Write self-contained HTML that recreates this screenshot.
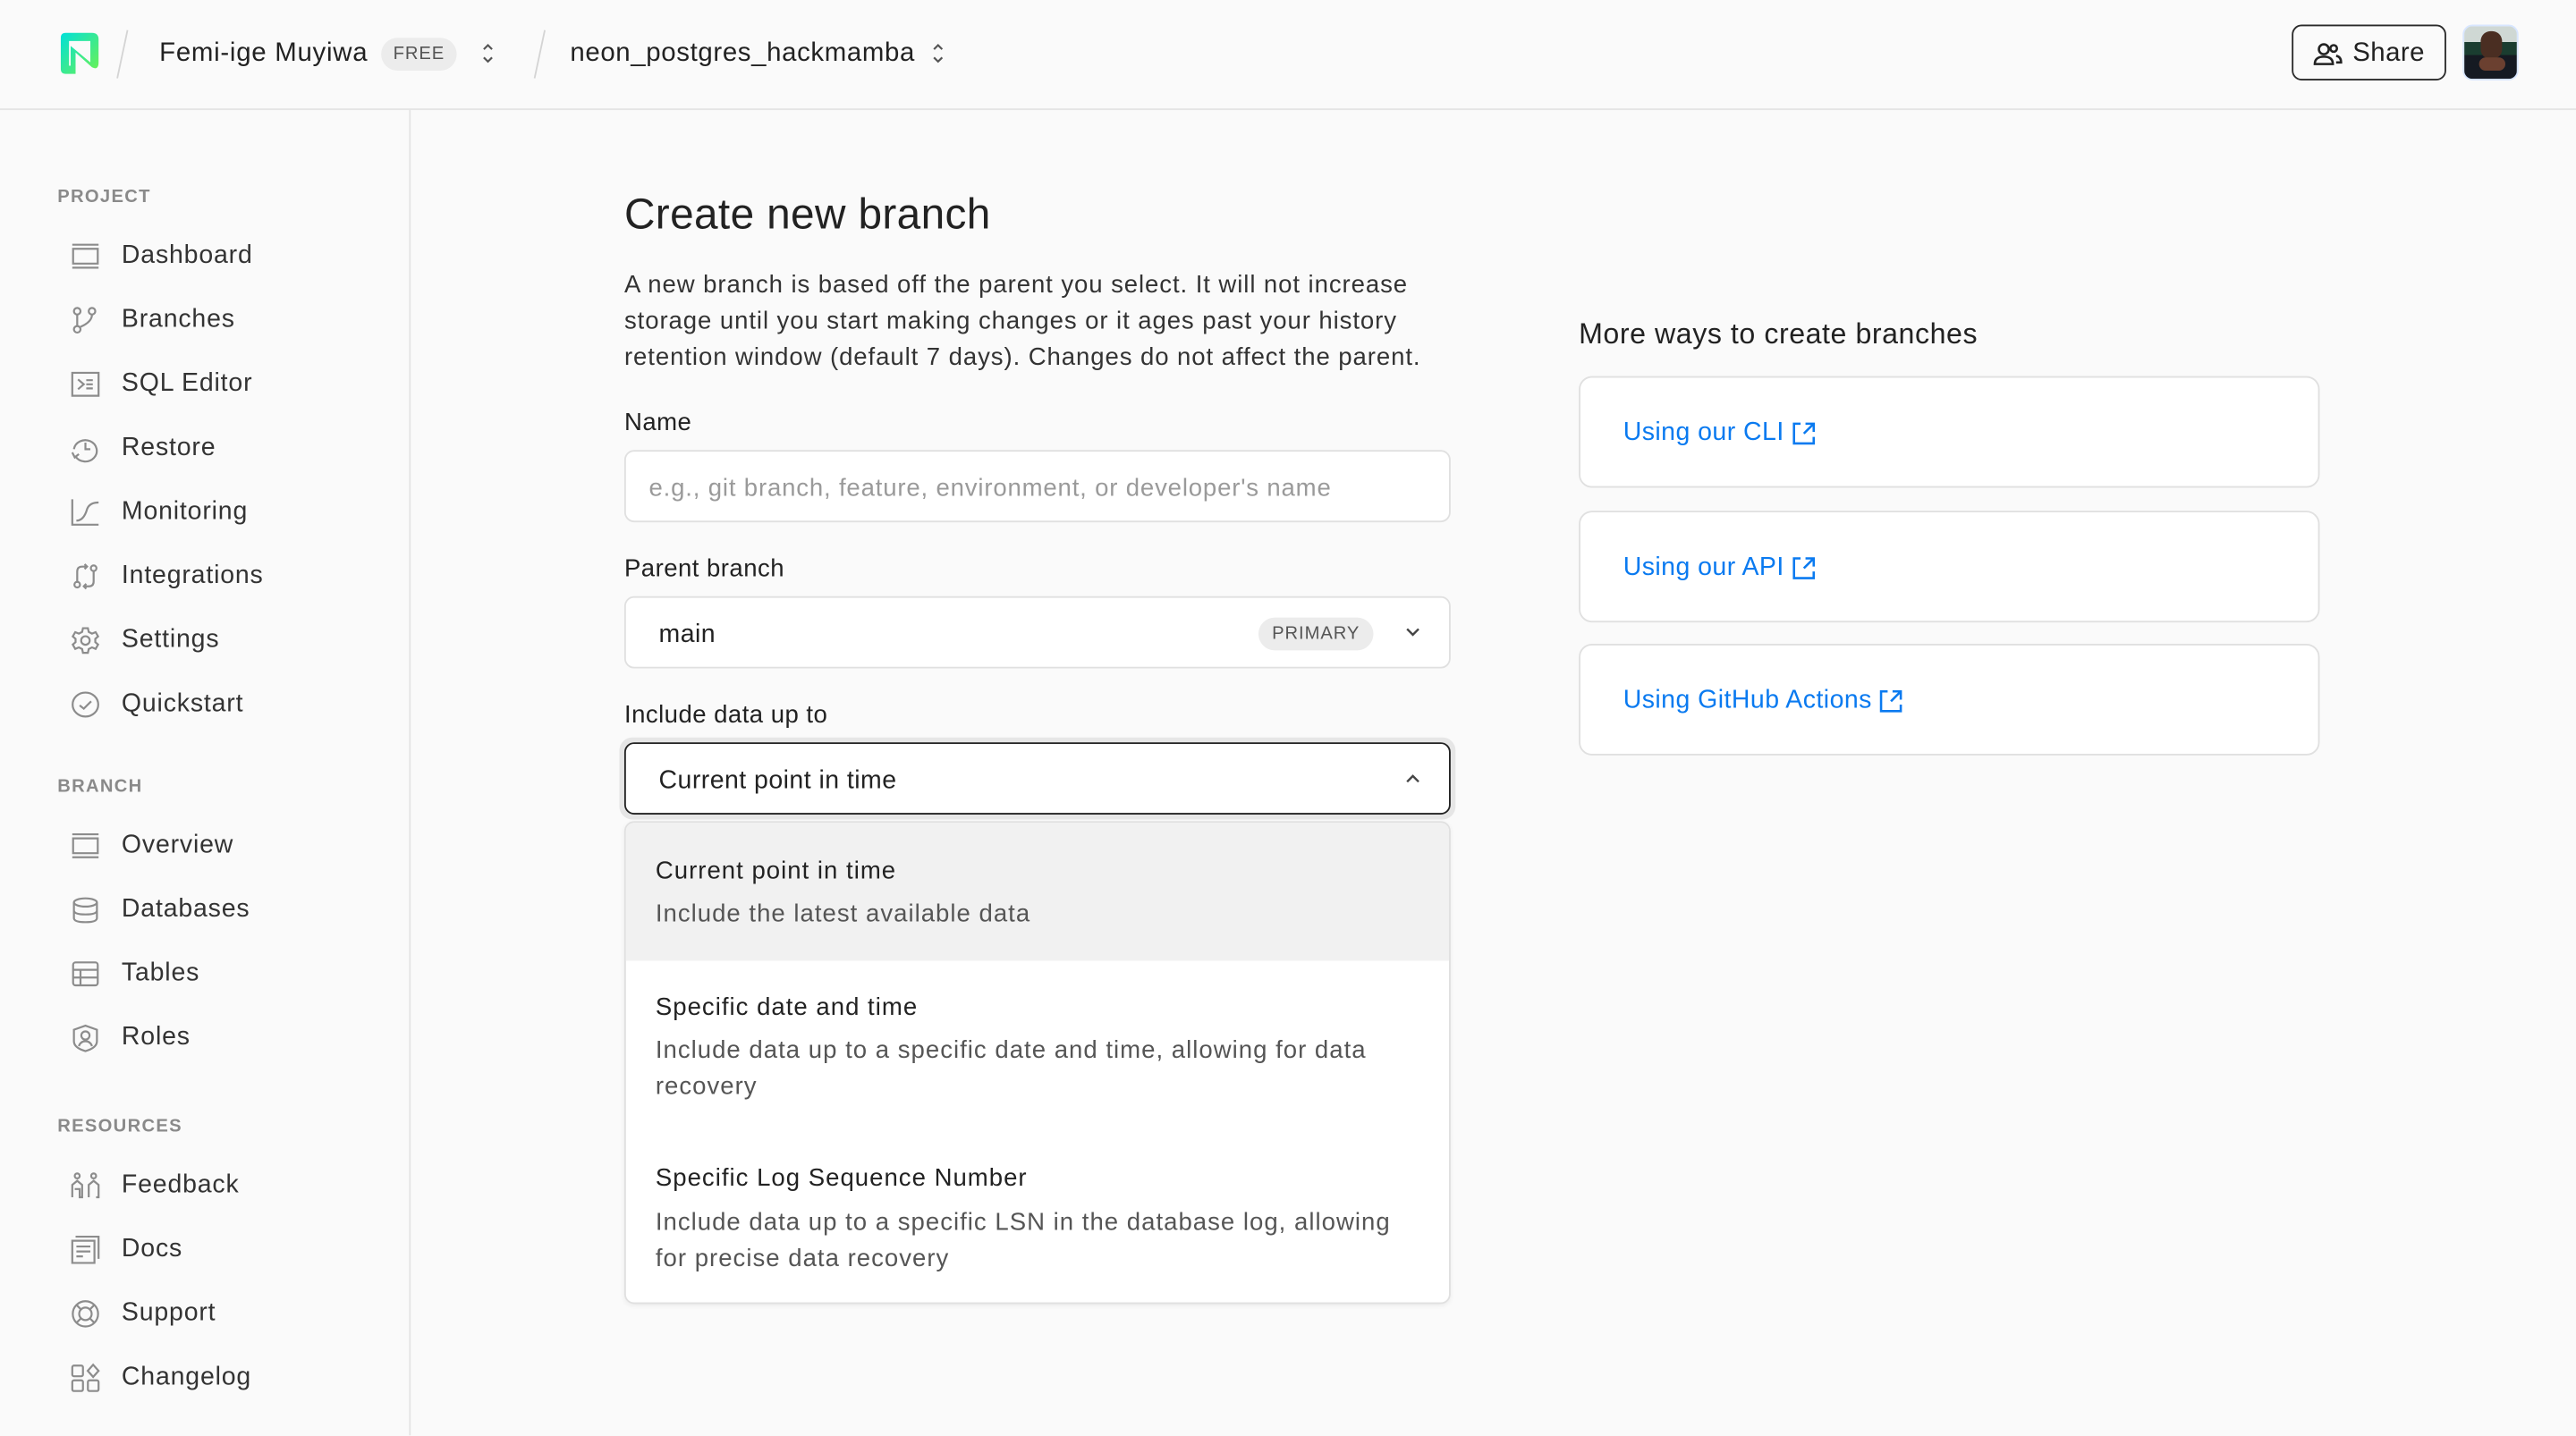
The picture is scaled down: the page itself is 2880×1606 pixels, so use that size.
<!DOCTYPE html>
<html><head><meta charset="utf-8"><style>
*{box-sizing:border-box;margin:0;padding:0}
html,body{width:2880px;height:1606px;overflow:hidden;background:#fafafa}
#r{position:absolute;left:0;top:0;width:1568px;height:874px;transform:scale(1.83673);transform-origin:0 0;font-family:"Liberation Sans",sans-serif;color:#222;background:#fafafa;letter-spacing:.25px}
.a{position:absolute;white-space:nowrap}
.hdr{position:absolute;left:0;top:0;width:1568px;height:67px;border-bottom:1px solid #e4e4e4;background:#fafafa}
.side{position:absolute;left:0;top:67px;width:250px;height:807px;border-right:1px solid #e4e4e4}
.sec{position:absolute;left:35px;font-size:11px;letter-spacing:.7px;color:#8a8a8a;font-weight:bold}
.it{position:absolute;left:43px;height:22px;display:flex;align-items:center;font-size:15.5px;color:#333;letter-spacing:.45px}
.it svg{width:18px;height:18px;margin-right:13px;fill:none;stroke:#8c8c8c;stroke-width:1.2}
.lbl{position:absolute;left:380px;font-size:15px;color:#222}
.box{position:absolute;left:380px;width:503px;height:44px;border:1px solid #e0e0e0;border-radius:6px;background:#fff}
.card{position:absolute;left:961px;width:451px;height:68px;border:1px solid #e0e0e0;border-radius:8px;background:#fff}
.card span{position:absolute;left:26px;top:25px;font-size:15.5px;color:#0a7af0;display:flex;align-items:center}
.card svg{margin-left:4px;width:16px;height:16px;fill:none;stroke:#0a7af0;stroke-width:1.4}
.dd{letter-spacing:.55px}
</style></head><body><div id="r">
<div class="hdr">
  <svg class="a" style="left:35px;top:19px" width="26" height="27" viewBox="0 0 26 27"><defs><linearGradient id="g" x1="0" y1="0" x2="1" y2="1"><stop offset="0" stop-color="#00e0d9"/><stop offset="1" stop-color="#6ff24f"/></linearGradient></defs><path d="M2 4 Q2 1 5 1 H21 Q25 1 25 5 V19 Q25 24 21 22 L11 13 V26 H5 Q2 26 2 23 Z M7 6 V21 H8 V9 L20 19 V6 Z" fill="url(#g)" fill-rule="evenodd"/></svg>
  <div class="a" style="left:74px;top:18px;width:1px;height:30px;background:#d4d4d4;transform:rotate(12deg)"></div>
  <div class="a" style="left:97px;top:24px;font-size:16px;color:#222;letter-spacing:.4px">Femi-ige Muyiwa</div>
  <div class="a" style="left:232px;top:23px;width:46px;height:20px;border-radius:10px;background:#ececec;font-size:11px;color:#555;text-align:center;line-height:20px;letter-spacing:.5px">FREE</div>
  <svg class="a" style="left:292px;top:25px" width="10" height="15" viewBox="0 0 10 15" fill="none" stroke="#555" stroke-width="1.2"><path d="M2.5 5L5 2.5L7.5 5M2.5 10L5 12.5L7.5 10"/></svg>
  <div class="a" style="left:328px;top:18px;width:1px;height:30px;background:#d4d4d4;transform:rotate(12deg)"></div>
  <div class="a" style="left:347px;top:24px;font-size:16px;color:#222;letter-spacing:.35px">neon_postgres_hackmamba</div>
  <svg class="a" style="left:566px;top:25px" width="10" height="15" viewBox="0 0 10 15" fill="none" stroke="#555" stroke-width="1.2"><path d="M2.5 5L5 2.5L7.5 5M2.5 10L5 12.5L7.5 10"/></svg>
  <div class="a" style="left:1395px;top:15px;width:94px;height:34px;border:1.5px solid #2a2a2a;border-radius:6px;display:flex;align-items:center;justify-content:center;font-size:16px;color:#222;padding-top:2px"><svg width="18" height="16" viewBox="0 0 18 16" style="margin-right:6px" fill="none" stroke="#222" stroke-width="1.4"><circle cx="6.5" cy="5" r="3"/><path d="M1 14 Q1 9.5 6.5 9.5 Q12 9.5 12 14 Z"/><circle cx="12.5" cy="4.5" r="2"/><path d="M14 9 Q17 9.5 17 13 H14"/></svg>Share</div>
  <div class="a" style="left:1499px;top:15px;width:34px;height:34px;border-radius:6px;border:1.5px solid #d8e6ff;overflow:hidden;background:linear-gradient(180deg,#cfd8d4 0,#cfd8d4 30%,#1a3d30 30%,#1a3d30 55%,#151a22 55%)"><div style="position:absolute;left:10px;top:3px;width:13px;height:17px;border-radius:6px;background:#4a2e22"></div><div style="position:absolute;left:9px;top:19px;width:16px;height:8px;border-radius:4px;background:#6b4030"></div></div>
</div>
<div class="side">
  <div class="sec" style="top:47px">PROJECT</div>
  <div class="it" style="top:78px"><svg viewBox="0 0 18 18"><path d="M1 2H17M1 16H17M1.5 4.5H16.5V13.5H1.5Z"/></svg>Dashboard</div>
  <div class="it" style="top:117px"><svg viewBox="0 0 18 18"><circle cx="4" cy="3.5" r="2"/><circle cx="13" cy="3.5" r="2"/><circle cx="4" cy="14.5" r="2"/><path d="M4 5.5V12.5M13 5.5Q13 10 6 13"/></svg>Branches</div>
  <div class="it" style="top:156px"><svg viewBox="0 0 18 18"><path d="M1 2H17V16H1ZM4.5 6L8 9L4.5 12M9.5 6.5H13.5M9.5 9H13.5M9.5 11.5H13.5"/></svg>SQL Editor</div>
  <div class="it" style="top:195px"><svg viewBox="0 0 18 18"><path d="M3 14A7 6.5 0 1 0 2 9.5M1 11.5L2.5 14.5L5 12.5M9 5.5V9.5H12"/></svg>Restore</div>
  <div class="it" style="top:234px"><svg viewBox="0 0 18 18"><path d="M1 1V16.5H17M3.5 14Q8 14 10 7Q11.5 3 17 3"/></svg>Monitoring</div>
  <div class="it" style="top:273px"><svg viewBox="0 0 18 18"><circle cx="4" cy="14" r="1.7"/><circle cx="14" cy="4" r="1.7"/><path d="M4 12V6Q4 3 7 3H10M8.5 1.5L10 3L8.5 4.5M14 6V12Q14 15 11 15H8M9.5 13.5L8 15L9.5 16.5"/></svg>Integrations</div>
  <div class="it" style="top:312px"><svg viewBox="0 0 18 18"><circle cx="9" cy="9" r="2.6"/><path d="M7.5 1.5H10.5L11 3.8L13 4.8L15.2 3.9L16.7 6.5L15 8V10L16.7 11.5L15.2 14.1L13 13.2L11 14.2L10.5 16.5H7.5L7 14.2L5 13.2L2.8 14.1L1.3 11.5L3 10V8L1.3 6.5L2.8 3.9L5 4.8L7 3.8Z"/></svg>Settings</div>
  <div class="it" style="top:351px"><svg viewBox="0 0 18 18"><ellipse cx="9" cy="9" rx="7.8" ry="7.3"/><path d="M5.5 9.5L8 11.5L12.5 7"/></svg>Quickstart</div>
  <div class="sec" style="top:406px">BRANCH</div>
  <div class="it" style="top:437px"><svg viewBox="0 0 18 18"><path d="M1 2H17M1 16H17M1.5 4.5H16.5V13.5H1.5Z"/></svg>Overview</div>
  <div class="it" style="top:476px"><svg viewBox="0 0 18 18"><ellipse cx="9" cy="4.5" rx="7" ry="2.5"/><path d="M2 4.5V14Q2 16.5 9 16.5Q16 16.5 16 14V4.5M2 9.3Q2 11.8 9 11.8Q16 11.8 16 9.3"/></svg>Databases</div>
  <div class="it" style="top:515px"><svg viewBox="0 0 18 18"><rect x="1.5" y="2" width="15" height="14" rx="1.5"/><path d="M1.5 6.5H16.5M1.5 11.2H16.5M6 6.5V16"/></svg>Tables</div>
  <div class="it" style="top:554px"><svg viewBox="0 0 18 18"><path d="M9 1.5L16 4V11Q16 15 9 17Q2 15 2 11V4Z"/><circle cx="9" cy="7.5" r="2.5"/><path d="M5 14Q6 11 9 11Q12 11 13 14"/></svg>Roles</div>
  <div class="sec" style="top:613px">RESOURCES</div>
  <div class="it" style="top:644px"><svg viewBox="0 0 18 18"><circle cx="4" cy="3" r="1.5"/><circle cx="14" cy="3" r="1.5"/><path d="M1 16V8.5L4 6L7 8.5V16H5.5V11H2.5M11 16V8.5L14 6L17 8.5V16H15.5"/></svg>Feedback</div>
  <div class="it" style="top:683px"><svg viewBox="0 0 18 18"><path d="M1 3.5H14.5V17H1ZM3 1H17V14.5M3.5 7H12M3.5 10H12M3.5 13H7.5"/></svg>Docs</div>
  <div class="it" style="top:722px"><svg viewBox="0 0 18 18"><circle cx="9" cy="9" r="7.7"/><circle cx="9" cy="9" r="3.8"/><path d="M3.6 3.6L6.3 6.3M14.4 3.6L11.7 6.3M3.6 14.4L6.3 11.7M14.4 14.4L11.7 11.7"/></svg>Support</div>
  <div class="it" style="top:761px"><svg viewBox="0 0 18 18"><rect x="1" y="1.5" width="6.5" height="6.5" rx="1"/><rect x="1" y="10.5" width="6.5" height="6.5" rx="1"/><rect x="10.5" y="10.5" width="6.5" height="6.5" rx="1"/><path d="M13.7 1L17 4.7L13.7 8.4L10.4 4.7Z"/></svg>Changelog</div>
</div>
<div class="a" style="left:380px;top:115px;font-size:26px;color:#222;letter-spacing:.2px">Create new branch</div>
<div class="a dd" style="left:380px;top:163px;font-size:15px;line-height:22px;color:#333;letter-spacing:.5px">A new branch is based off the parent you select. It will not increase<br>storage until you start making changes or it ages past your history<br>retention window (default 7 days). Changes do not affect the parent.</div>
<div class="lbl" style="top:249px">Name</div>
<div class="box" style="top:274px"><div class="a" style="left:14px;top:14px;font-size:15px;color:#9a9a9a;letter-spacing:.45px">e.g., git branch, feature, environment, or developer's name</div></div>
<div class="lbl" style="top:338px">Parent branch</div>
<div class="box" style="top:363px"><div class="a" style="left:20px;top:14px;font-size:15.5px;color:#222">main</div><div class="a" style="left:385px;top:12px;width:70px;height:20px;border-radius:10px;background:#ececec;font-size:11px;color:#555;text-align:center;line-height:20px;letter-spacing:.5px">PRIMARY</div><svg class="a" style="left:474px;top:17px" width="10" height="8" viewBox="0 0 10 8" fill="none" stroke="#444" stroke-width="1.3"><path d="M1.5 2L5 5.5L8.5 2"/></svg></div>
<div class="lbl" style="top:427px">Include data up to</div>
<div class="a" style="left:377px;top:449px;width:509px;height:50px;border-radius:8px;background:#e6e6e6"></div>
<div class="box" style="top:452px;border:1.5px solid #222"><div class="a" style="left:20px;top:14px;font-size:15.5px;color:#222">Current point in time</div><svg class="a" style="left:474px;top:17px" width="10" height="8" viewBox="0 0 10 8" fill="none" stroke="#444" stroke-width="1.3"><path d="M1.5 6L5 2.5L8.5 6"/></svg></div>
<div class="a dd" style="left:380px;top:500px;width:503px;height:294px;border:1px solid #e0e0e0;border-radius:6px;background:#fff;overflow:hidden;box-shadow:0 1px 3px rgba(0,0,0,.06)">
  <div style="position:absolute;left:0;top:0;width:503px;height:84px;background:#f1f1f1"></div>
  <div class="a" style="left:18px;top:21px;font-size:15px;color:#222">Current point in time</div>
  <div class="a" style="left:18px;top:47px;font-size:15px;color:#555">Include the latest available data</div>
  <div class="a" style="left:18px;top:104px;font-size:15px;color:#222">Specific date and time</div>
  <div class="a" style="left:18px;top:128px;font-size:15px;line-height:22px;color:#555">Include data up to a specific date and time, allowing for data<br>recovery</div>
  <div class="a" style="left:18px;top:208px;font-size:15px;color:#222">Specific Log Sequence Number</div>
  <div class="a" style="left:18px;top:233px;font-size:15px;line-height:22px;color:#555">Include data up to a specific LSN in the database log, allowing<br>for precise data recovery</div>
</div>
<div class="a" style="left:961px;top:193px;font-size:17.5px;color:#222;letter-spacing:.3px">More ways to create branches</div>
<div class="card" style="top:229px"><span>Using our CLI<svg viewBox="0 0 16 16"><path d="M6 2H2V14H14V10M9 2H14V7M14 2L8 8"/></svg></span></div>
<div class="card" style="top:311px"><span>Using our API<svg viewBox="0 0 16 16"><path d="M6 2H2V14H14V10M9 2H14V7M14 2L8 8"/></svg></span></div>
<div class="card" style="top:392px"><span>Using GitHub Actions<svg viewBox="0 0 16 16"><path d="M6 2H2V14H14V10M9 2H14V7M14 2L8 8"/></svg></span></div>
</div></body></html>
